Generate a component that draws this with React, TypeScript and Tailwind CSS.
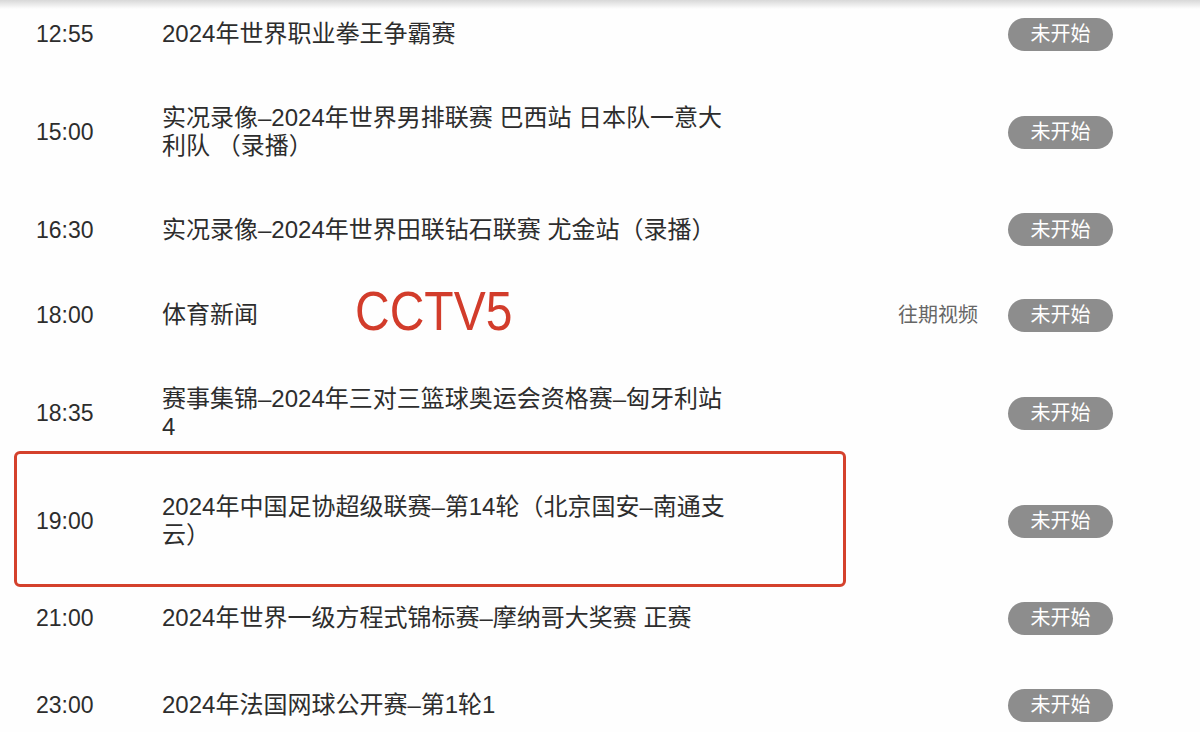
import React from "react";

type Row = {
  time: string;
  lines: string[];
  h: string;
  extra?: "past" | "cctv" | "box";
};

const rows: Row[] = [
  { time: "12:55", lines: ["2024年世界职业拳王争霸赛"], h: "h-[86px]" },
  {
    time: "15:00",
    lines: ["实况录像–2024年世界男排联赛 巴西站 日本队一意大", "利队 （录播）"],
    h: "h-[110px]",
  },
  { time: "16:30", lines: ["实况录像–2024年世界田联钻石联赛 尤金站（录播）"], h: "h-[85px]" },
  { time: "18:00", lines: ["体育新闻"], h: "h-[86px]", extra: "cctv" },
  {
    time: "18:35",
    lines: ["赛事集锦–2024年三对三篮球奥运会资格赛–匈牙利站", "4"],
    h: "h-[110px]",
  },
  {
    time: "19:00",
    lines: ["2024年中国足协超级联赛–第14轮（北京国安–南通支", "云）"],
    h: "h-[106px]",
    extra: "box",
  },
  { time: "21:00", lines: ["2024年世界一级方程式锦标赛–摩纳哥大奖赛 正赛"], h: "h-[88px]" },
  { time: "23:00", lines: ["2024年法国网球公开赛–第1轮1"], h: "h-[86px]" },
];

export default function App() {
  return (
    <div className="relative w-[1200px] h-[732px] overflow-hidden bg-[#fefefe] text-[#2f2f2f] font-['Liberation_Sans','Noto_Sans_CJK_SC',sans-serif]">
      <div className="-mt-[9px] flex flex-col">
        {rows.map((r) => (
          <div key={r.time} className={`relative flex items-center pl-[36px] pr-[87px] ${r.h}`}>
            <div className="w-[126px] shrink-0 text-[23px] leading-[28px] text-[#2d2d2d]">{r.time}</div>
            <div className="flex-1 text-[24px] leading-[28px] whitespace-nowrap text-[#2d2d2d]">
              {r.lines.map((l, i) => (
                <div key={i}>{l}</div>
              ))}
            </div>
            {r.extra === "cctv" && (
              <div className="mr-[30px] text-[20px] text-[#666]">往期视频</div>
            )}
            <div className="flex h-[33px] w-[105px] items-center justify-center rounded-full bg-[#8d8d8d] text-[20px] text-white">
              未开始
            </div>
            {r.extra === "cctv" && (
              <div className="absolute left-[355px] top-[16px] text-[48px] leading-none text-[#d23c2b] scale-y-[1.15]">
                CCTV5
              </div>
            )}
            {r.extra === "box" && (
              <div className="absolute left-[14px] -top-[17px] -bottom-[13px] w-[832px] rounded-[6px] border-[3px] border-[#d4412c]" />
            )}
          </div>
        ))}
      </div>
      <div className="absolute left-0 right-0 top-0 h-[9px] bg-gradient-to-b from-[#d8d8d8] to-transparent" />
    </div>
  );
}
